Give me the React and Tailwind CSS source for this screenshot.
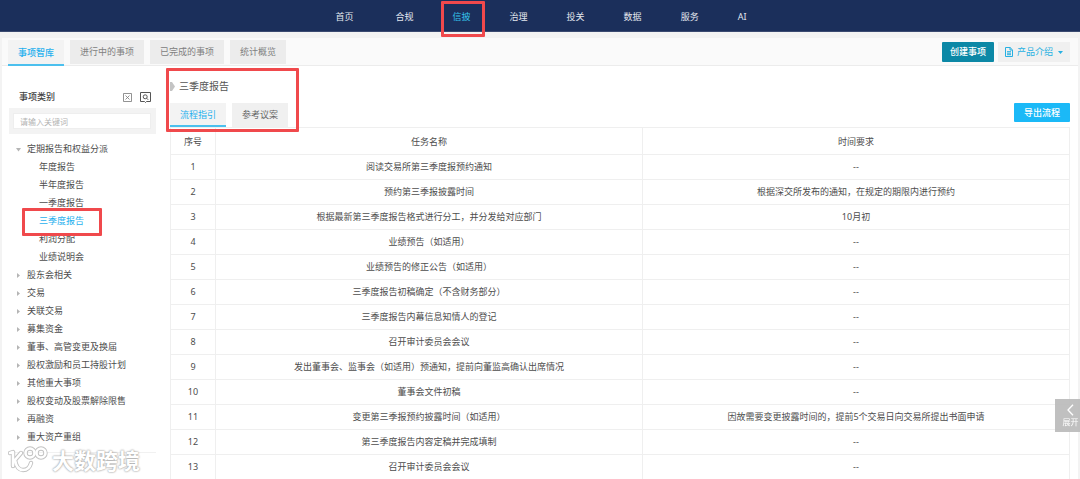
import React from "react";

const NAV = ["合规", "信披", "治理", "投关", "数据", "服务", "AI"];
const TABS = ["事项智库", "进行中的事项", "已完成的事项", "统计概览"];
const REPORTS = ["年度报告", "半年度报告", "一季度报告", "三季度报告", "利润分配", "业绩说明会"];
const GROUPS = [
  "股东会相关",
  "交易",
  "关联交易",
  "募集资金",
  "董事、高管变更及换届",
  "股权激励和员工持股计划",
  "其他重大事项",
  "股权变动及股票解除限售",
  "再融资",
  "重大资产重组",
];
const ROWS = [
  ["阅读交易所第三季度报预约通知", "--"],
  ["预约第三季报披露时间", "根据深交所发布的通知，在规定的期限内进行预约"],
  ["根据最新第三季度报告格式进行分工，并分发给对应部门", "10月初"],
  ["业绩预告（如适用）", "--"],
  ["业绩预告的修正公告（如适用）", "--"],
  ["三季度报告初稿确定（不含财务部分）", "--"],
  ["三季度报告内幕信息知情人的登记", "--"],
  ["召开审计委员会会议", "--"],
  ["发出董事会、监事会（如适用）预通知，提前向董监高确认出席情况", "--"],
  ["董事会文件初稿", "--"],
  ["变更第三季报预约披露时间（如适用）", "因故需要变更披露时间的，提前5个交易日向交易所提出书面申请"],
  ["第三季度报告内容定稿并完成填制", "--"],
  ["召开审计委员会会议", "--"],
];

function Highlight({ className }) {
  return (
    <span
      aria-hidden="true"
      className={"pointer-events-none absolute z-10 rounded-[1px] border-3 border-[#f0494c] " + className}
    />
  );
}

function TopNav() {
  return (
    <nav className="flex h-8 justify-center border-b border-[#3a4a70] bg-[#1b2f5b] pl-0.5 text-[#e3e7ef]">
      <a href="#home" className="mr-[42px] leading-[33px]">首页</a>
      <ul className="flex gap-[39px]">
        {NAV.map((name) => (
          <li key={name} className="relative leading-[33px]">
            <a href={"#" + name} className={name === "信披" ? "text-[#35c3ee]" : ""}>{name}</a>
            {name === "信披" && <Highlight className="-left-3 top-px h-9 w-11" />}
          </li>
        ))}
      </ul>
    </nav>
  );
}

function TabBar() {
  return (
    <div className="flex h-7 items-end justify-between border-b border-[#ececec] bg-[#fafafa] pr-2 pl-1.5">
      <div className="flex h-[25px] gap-1.5">
        {TABS.map((name, i) => (
          <button
            key={name}
            type="button"
            className={
              i === 0
                ? "-mb-px border-b-2 border-[#4cc0ee] bg-[#f3f3f3] px-2.5 pt-0.5 font-medium text-[#1fb0ee]"
                : "mb-px bg-[#ececec] px-2.5 text-[#808080]"
            }
          >
            {name}
          </button>
        ))}
      </div>
      <div className="mb-[3px] flex h-5 gap-1">
        <button type="button" className="rounded-[1px] bg-[#0c88a6] px-2 font-medium text-white">创建事项</button>
        <button type="button" className="flex items-center justify-center gap-1 bg-[#f0f0f0] px-[7px] text-[#27b0e2]">
          <svg width="8" height="10" viewBox="0 0 8 10" fill="none" stroke="currentColor" strokeWidth="1" aria-hidden="true">
            <path d="M.5.5h4.6l2.4 2.4v6.6h-7zM5 .5V3h2.5M2 4.7h4M2 6.2h4M2 7.7h4" />
          </svg>
          产品介绍
          <svg width="5" height="3" viewBox="0 0 5 3" fill="currentColor" className="ml-px" aria-hidden="true">
            <path d="M0 0h5L2.5 3z" />
          </svg>
        </button>
      </div>
    </div>
  );
}

function Arrow({ open }) {
  return (
    <svg width="5" height="5" viewBox="0 0 5 5" fill="#b5b5b5" className="mr-1.5 shrink-0" aria-hidden="true">
      <path d={open ? "M0 1h5L2.5 4.4z" : "M1 0v5L4 2.5z"} />
    </svg>
  );
}

function Sidebar() {
  return (
    <aside className="w-[154px] shrink-0 pl-[7px]">
      <div className="mt-6 flex h-[18px] items-start justify-between pr-[5px] pl-2.5">
        <h2 className="font-medium leading-[14px] text-[#444]">事项类别</h2>
        <div className="flex items-center gap-2 pt-0.5 text-[#777]">
          <button type="button" aria-label="收起">
            <svg width="9" height="9" viewBox="0 0 9 9" fill="none" stroke="currentColor" strokeWidth=".8" className="block">
              <path d="M.5.5h8v8h-8zM2.5 2.5l4 4M6.5 2.5l-4 4" />
            </svg>
          </button>
          <button type="button" aria-label="搜索" className="text-[#555]">
            <svg width="11" height="11" viewBox="0 0 11 11" fill="none" stroke="currentColor" strokeWidth="1" className="block">
              <path d="M.5.5h10v9H6.5l-1 1-1-1h-4zM6.6 6.2l1.6 1.6" />
              <circle cx="5.2" cy="4.8" r="2" />
            </svg>
          </button>
        </div>
      </div>
      <div className="bg-[#f3f3f3] py-[5px] pr-[5px] pl-1">
        <input
          aria-label="请输入关键词"
          placeholder="请输入关键词"
          className="block h-4 w-full border border-[#eeeeee] bg-white px-1.5 text-[8px] outline-none placeholder:text-[#b3b3b3]"
        />
      </div>
      <ul className="mt-1.5 border-b border-[#f1f1f1] pb-1.5 pl-[7px] leading-[18px]">
        <li>
          <a href="#periodic" className="flex items-center"><Arrow open />定期报告和权益分派</a>
          <ul className="pl-[23px]">
            {REPORTS.map((name) => (
              <li key={name} className="relative">
                <a href={"#" + name} className={name === "三季度报告" ? "text-[#1fb0ee]" : ""}>{name}</a>
                {name === "三季度报告" && <Highlight className="-top-1 -left-[17px] h-7 w-20" />}
              </li>
            ))}
          </ul>
        </li>
        {GROUPS.map((name) => (
          <li key={name}>
            <a href={"#" + name} className="flex items-center whitespace-nowrap"><Arrow />{name}</a>
          </li>
        ))}
      </ul>
    </aside>
  );
}

function Content() {
  return (
    <main className="min-w-0 grow pt-2.5 pr-2 pl-3.5">
      <div className="relative">
        <h1 className="flex h-5 items-center gap-1 text-[10px] text-[#555]">
          <svg width="5" height="9" viewBox="0 0 5 9" fill="#c4c4c4" aria-hidden="true">
            <path d="M0 0h2l3 4.5L2 9H0z" />
          </svg>
          三季度报告
        </h1>
        <div className="mt-[7px] flex h-6 items-start justify-between">
          <div className="flex h-full gap-1.5">
            <button type="button" className="border-b-2 border-[#4cc0ee] bg-[#f3f3f3] px-2.5 pt-0.5 text-[#1fb0ee]">流程指引</button>
            <button type="button" className="bg-[#f0f0f0] px-2.5 text-[#666]">参考议案</button>
          </div>
          <button type="button" className="h-[19px] rounded-[1px] bg-[#1bb9f7] px-2.5 font-medium text-white">导出流程</button>
        </div>
        <Highlight className="-top-2 -left-1 h-16 w-[133px]" />
      </div>
      <table className="w-full table-fixed border-collapse text-center">
        <thead>
          <tr className="h-[27px]">
            <th className="w-[45px] border border-[#efefef] pt-0.5 font-normal">序号</th>
            <th className="border border-[#efefef] pt-0.5 font-normal">任务名称</th>
            <th className="border border-[#efefef] pt-0.5 font-normal">时间要求</th>
          </tr>
        </thead>
        <tbody>
          {ROWS.map(([task, time], i) => (
            <tr key={i} className="h-[25px]">
              <td className="border border-[#efefef]">{i + 1}</td>
              <td className="border border-[#efefef]">{task}</td>
              <td className="border border-[#efefef]">{time}</td>
            </tr>
          ))}
        </tbody>
      </table>
    </main>
  );
}

function Watermark() {
  return (
    <div className="pointer-events-none absolute top-[445px] left-2 flex items-center gap-[3px] text-white">
      <svg
        width="41"
        height="28"
        viewBox="0 0 41 28"
        fill="none"
        strokeLinecap="round"
        strokeLinejoin="round"
        aria-hidden="true"
      >
        <g stroke="#c2c2c2" strokeWidth="4.4">
          <path d="M2 7l3-1v14M13 7L7 14c1 6 4 10 8 10 4 0 7-3 8-7" />
          <circle cx="22" cy="7" r="4.5" />
          <circle cx="33" cy="7" r="4.5" />
        </g>
        <g stroke="#fff" strokeWidth="2.6">
          <path d="M2 7l3-1v14M13 7L7 14c1 6 4 10 8 10 4 0 7-3 8-7" />
          <circle cx="22" cy="7" r="4.5" />
          <circle cx="33" cy="7" r="4.5" />
        </g>
      </svg>
      <span className="text-[22px] leading-[30px] font-bold [text-shadow:0_0_2px_#999,0_0_2px_#bbb]">大数跨境</span>
    </div>
  );
}

export default function App() {
  return (
    <div className="relative flex min-h-screen flex-col bg-[#f3f3f3] font-['Noto_Sans','Noto_Sans_CJK_SC',sans-serif] text-[9px] leading-3 text-[#4d4d4d]">
      <TopNav />
      <div className="mx-0.5 mt-1.5 flex grow flex-col bg-white">
        <TabBar />
        <div className="flex grow">
          <Sidebar />
          <Content />
        </div>
      </div>
      <button
        type="button"
        className="fixed right-0 bottom-[47px] flex h-[33px] w-[25px] flex-col items-center justify-center overflow-hidden bg-[#b9b9b9]/90 pl-1.5 text-[8px] leading-3 whitespace-nowrap text-white"
      >
        <svg width="7" height="12" viewBox="0 0 7 12" fill="none" stroke="currentColor" strokeWidth="1.3" aria-hidden="true">
          <path d="M6 .8L1 6l5 5.2" />
        </svg>
        展开
      </button>
      <Watermark />
    </div>
  );
}
